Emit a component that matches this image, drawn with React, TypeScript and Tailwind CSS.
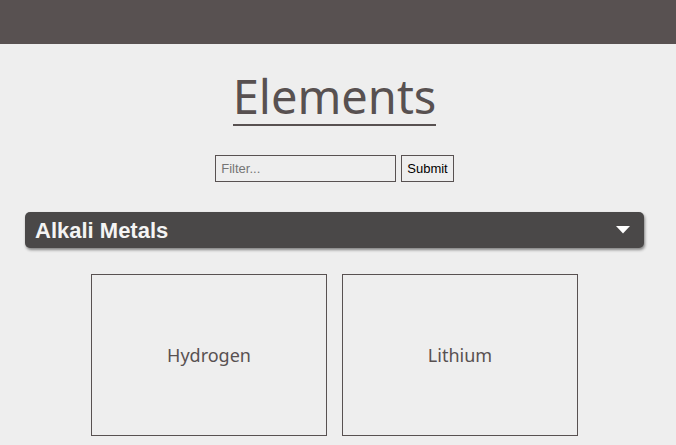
import React, { useState } from 'react';

const elements = ['Hydrogen', 'Lithium'];

const App: React.FC = () => {
  const [filter, setFilter] = useState('');
  const [open, setOpen] = useState(true);

  return (
    <div className="min-h-[445px] bg-[#eeeeee]" style={{ fontFamily: '"Trebuchet MS", "Noto Sans", sans-serif' }}>
      <div className="h-[44px] bg-[#585151]" />
      <div className="w-[669px]">
        <div className="flex justify-center pt-[24px]">
          <h1 className="text-[47px] leading-[56px] text-[#585151] border-b-2 border-[#585151] pb-[0px]">Elements</h1>
        </div>
        <form
          onSubmit={(e) => e.preventDefault()}
          className="flex justify-center items-center gap-[5px] mt-[29px]"
          style={{ fontFamily: '"Liberation Sans", Arial, sans-serif' }}
        >
          <input
            type="text"
            value={filter}
            onChange={(e) => setFilter(e.target.value)}
            placeholder="Filter..."
            className="w-[181px] h-[27px] border border-[#585151] bg-[#eeeeee] px-[5px] text-[13px] text-black placeholder:text-[#757575] outline-none"
          />
          <button type="submit" className="h-[27px] px-[5px] border border-[#585151] bg-[#eeeeee] text-[13px] text-black">
            Submit
          </button>
        </form>
        <div className="px-[25px] mt-[30px]">
          <button
            onClick={() => setOpen(!open)}
            className="w-full h-[36px] bg-[#4a4848] rounded-[5px] shadow-[1px_2px_3px_rgba(0,0,0,0.45)] flex items-center justify-between pl-[10px] pr-[14px]"
          >
            <span className="text-[#f4f4f4] text-[22px] font-bold" style={{ fontFamily: '"Liberation Sans", Arial, sans-serif' }}>
              Alkali Metals
            </span>
            <svg width="14" height="8" viewBox="0 0 14 8">
              <path d="M0 0 H14 L7 7.5 Z" fill="#ffffff" />
            </svg>
          </button>
        </div>
        {open && (
          <div className="flex justify-center gap-[15px] mt-[26px]">
            {elements.map((el) => (
              <div key={el} className="w-[236px] h-[162px] border border-[#585151] flex items-center justify-center">
                <span className="text-[18px] text-[#585151]">{el}</span>
              </div>
            ))}
          </div>
        )}
      </div>
    </div>
  );
};

export default App;
